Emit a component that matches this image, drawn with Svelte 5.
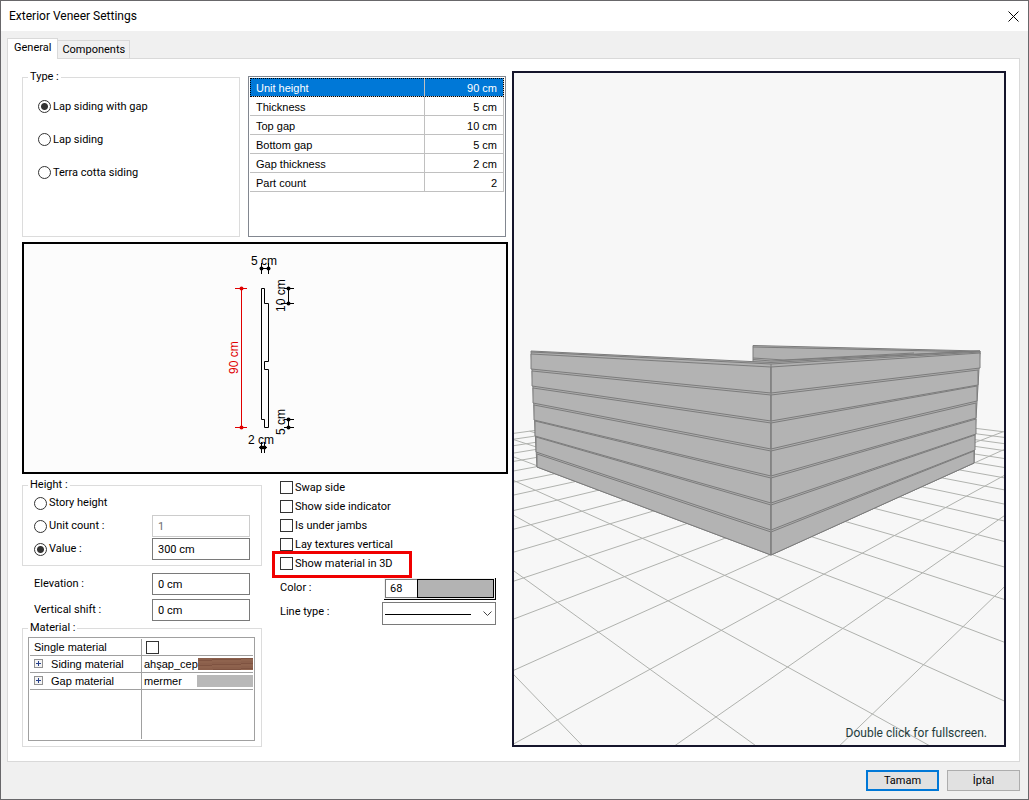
<script lang="ts">
  type Param = { name: string; value: string }
  type Point = [number, number]

  const tabs = ['General', 'Components']
  const types = ['Lap siding with gap', 'Lap siding', 'Terra cotta siding']

  const params: Param[] = [
    { name: 'Unit height', value: '90 cm' },
    { name: 'Thickness', value: '5 cm' },
    { name: 'Top gap', value: '10 cm' },
    { name: 'Bottom gap', value: '5 cm' },
    { name: 'Gap thickness', value: '2 cm' },
    { name: 'Part count', value: '2' }
  ]

  let options = $state([
    { label: 'Swap side', on: false },
    { label: 'Show side indicator', on: false },
    { label: 'Is under jambs', on: false },
    { label: 'Lay textures vertical', on: false },
    { label: 'Show material in 3D', on: false, marked: true }
  ])

  let tab = $state('General')
  let type = $state('Lap siding with gap')
  let selected = $state('Unit height')
  let heightMode = $state('value')
  let unitCount = $state('1')
  let height = $state('300 cm')
  let elevation = $state('0 cm')
  let shift = $state('0 cm')
  let color = $state('68')
  let single = $state(false)

  // Floor plane -> view
  function project(u: number, v: number): Point {
    const w = 1 - 0.1238 * u + 0.1295 * v
    return [(136 + 40.98 * u + 98.14 * v) / w, (596.3 - 32.06 * u + 33.15 * v) / w]
  }

  function line(a: Point, b: Point) {
    return `M${a[0].toFixed(1)} ${a[1].toFixed(1)}L${b[0].toFixed(1)} ${b[1].toFixed(1)}`
  }

  let floor = ''
  for (let u = -14; u <= 2; u++) floor += line(project(u, -3), project(u, 16))
  for (let v = -1; v <= 16; v++) floor += line(project(-14, v), project(4, v))

  // Each board: left x, top, bottom / corner top, bottom / right x, top, bottom
  const boards = [
    [17, 281, 296, 294, 320, 466, 280, 295],
    [18, 298, 313, 322, 348, 464, 297, 312],
    [19, 315, 330, 350, 376, 463, 313, 328],
    [20, 332, 347, 378, 403, 462, 330, 345],
    [21, 348, 363, 405, 430, 462, 346, 361],
    [22, 364, 379, 432, 457, 461, 362, 377],
    [23, 381, 394, 459, 482, 460, 378, 390]
  ]
</script>

<main class="dialog">
  <header class="title">
    <h1>Exterior Veneer Settings</h1>
    <button type="button" class="close" aria-label="Close">
      <svg width="11" height="11" viewBox="0 0 11 11"><path d="M.5 .5l10 10M10.5 .5l-10 10" /></svg>
    </button>
  </header>

  <div class="body">
    <div class="tabs" role="tablist">
      {#each tabs as t}
        <button type="button" role="tab" aria-selected={tab === t} class:active={tab === t} onclick={() => tab = t}>{t}</button>
      {/each}
    </div>

    <section class="panel">
      <div class="settings">
        <div class="top">
          <fieldset class="types">
            <legend>Type :</legend>
            {#each types as t}
              <label><input type="radio" name="type" value={t} bind:group={type} />{t}</label>
            {/each}
          </fieldset>

          <div class="list">
            <table>
              <tbody>
                {#each params as p (p.name)}
                  <tr class:selected={selected === p.name} onclick={() => selected = p.name}>
                    <th scope="row">{p.name}</th>
                    <td>{p.value}</td>
                  </tr>
                {/each}
              </tbody>
            </table>
          </div>
        </div>

        <div class="section-view">
          <svg width="482" height="228" viewBox="0 0 482 228">
            <path class="ink" d="M237.5 44.5H240.5V59.5H244.5V117.5H240.5V125.5H244.5V183.5H240.5V175.5H237.5Z" />
            <g class="dim red">
              <path d="M217.5 44.5V183.5M211 44.5H223M211 183.5H223" />
              <circle cx="217.5" cy="44.5" r="2" /><circle cx="217.5" cy="183.5" r="2" />
              <text transform="translate(214 130) rotate(-90)">90 cm</text>
            </g>
            <g class="dim">
              <path d="M237.5 19V30M244.5 19V30M237 24.5H245" />
              <circle cx="237.5" cy="24.5" r="2" /><circle cx="244.5" cy="24.5" r="2" />
              <text x="227" y="21">5 cm</text>
              <path d="M237.5 198V209M240.5 198V209M235 203.5H243" />
              <circle cx="237.5" cy="203.5" r="2" /><circle cx="240.5" cy="203.5" r="2" />
              <text x="224" y="200">2 cm</text>
              <path d="M264.5 44.5V59.5M260 44.5H270M257 59.5H270" />
              <circle cx="264.5" cy="44.5" r="2" /><circle cx="264.5" cy="59.5" r="2" />
              <text transform="translate(261 68) rotate(-90)">10 cm</text>
              <path d="M264.5 175.5V183.5M260 175.5H270M260 183.5H270" />
              <circle cx="264.5" cy="175.5" r="2" /><circle cx="264.5" cy="183.5" r="2" />
              <text transform="translate(261 191) rotate(-90)">5 cm</text>
            </g>
          </svg>
        </div>

        <div class="bottom">
          <div class="left">
            <fieldset class="height">
              <legend>Height :</legend>
              <div class="row">
                <label><input type="radio" name="height" value="story" bind:group={heightMode} />Story height</label>
              </div>
              <div class="row">
                <label><input type="radio" name="height" value="count" bind:group={heightMode} />Unit count :</label>
                <input type="text" aria-label="Unit count" bind:value={unitCount} disabled={heightMode !== 'count'} />
              </div>
              <div class="row">
                <label><input type="radio" name="height" value="value" bind:group={heightMode} />Value :</label>
                <input type="text" aria-label="Value" bind:value={height} disabled={heightMode !== 'value'} />
              </div>
            </fieldset>

            <div class="offsets">
              <div class="row">
                <label for="elevation">Elevation :</label>
                <input id="elevation" type="text" bind:value={elevation} />
              </div>
              <div class="row">
                <label for="shift">Vertical shift :</label>
                <input id="shift" type="text" bind:value={shift} />
              </div>
            </div>

            <fieldset class="material">
              <legend>Material :</legend>
              <div class="tree">
                <table>
                  <tbody>
                    <tr>
                      <th scope="row"><label for="single">Single material</label></th>
                      <td><input id="single" type="checkbox" bind:checked={single} /></td>
                    </tr>
                    <tr>
                      <th scope="row">
                        <button type="button" aria-label="Expand siding material"><svg width="9" height="9" viewBox="0 0 9 9"><path d="M2 4.5h5M4.5 2v5" /></svg></button>
                        Siding material
                      </th>
                      <td><div class="cell"><span>ahşap_cep</span><i class="wood"></i></div></td>
                    </tr>
                    <tr>
                      <th scope="row">
                        <button type="button" aria-label="Expand gap material"><svg width="9" height="9" viewBox="0 0 9 9"><path d="M2 4.5h5M4.5 2v5" /></svg></button>
                        Gap material
                      </th>
                      <td><div class="cell"><span>mermer</span><i></i></div></td>
                    </tr>
                    <tr class="rest"><td></td><td></td></tr>
                  </tbody>
                </table>
              </div>
            </fieldset>
          </div>

          <div class="right">
            {#each options as o}
              <label class="option" class:marked={o.marked}><input type="checkbox" bind:checked={o.on} />{o.label}</label>
            {/each}
            <div class="picks">
              <label for="color">Color :</label>
              <div class="color">
                <input id="color" type="text" bind:value={color} />
                <button type="button" aria-label="Choose color"></button>
              </div>
              <label for="linetype">Line type :</label>
              <div class="linetype">
                <select id="linetype"><option value="solid" aria-label="Solid"></option></select>
                <svg width="9" height="6" viewBox="0 0 9 6"><path d="M.5 .5l4 4 4-4" /></svg>
              </div>
            </div>
          </div>
        </div>
      </div>

      <div class="scene">
        <svg viewBox="0 0 490 672" preserveAspectRatio="xMidYMid slice">
          <path class="floor" d={floor} />
          <path class="wall" d="M239 272.5L466 278V281L257 291 239 289Z" />
          <path class="edge" d="M239 274L466 279" />
          <path class="wall" d="M17 278L257 289.5 466 278 465 296 464 313 463 329 462 345 461 361 460 390 257 482 23 394Z" />
          <path class="edge" d="M17 279L257 291 466 279M239 285L270 287 400 280M239 286.5L257 288 466 278" />
          {#each boards as [lx, lt, lb, ct, cb, rx, rt, rb]}
            <path class="board" d="M{lx} {lt}L257 {ct}V{cb}L{lx} {lb}Z" />
            <path class="board" d="M257 {ct}L{rx} {rt}V{rb}L257 {cb}Z" />
          {/each}
          <path class="edge" d="M257 291V482" />
        </svg>
        <p>Double click for fullscreen.</p>
      </div>
    </section>

    <footer>
      <button type="button" class="default">Tamam</button>
      <button type="button">İptal</button>
    </footer>
  </div>
</main>

<style>
  :global(body) { margin: 0; background: #f0f0f0; }

  .dialog {
    box-sizing: border-box;
    min-height: 100vh;
    min-width: 860px;
    border: 1px solid #68676a;
    background: #f0f0f0;
    color: #000;
    font: 11px/14px Roboto, "Noto Sans", sans-serif;
  }
  .dialog :is(input, select, button) { font: inherit; color: inherit; box-sizing: border-box; margin: 0; }

  .title { display: flex; align-items: center; justify-content: space-between; height: 30px; padding: 0 9px 0 8px; background: #fff; }
  h1 { margin: 0; font-size: 12px; font-weight: 400; line-height: 16px; }
  .close { display: flex; padding: 0; border: 0; background: none; }
  .close path { fill: none; stroke: #000; }

  .body { padding: 7px 8px 8px 6px; }
  .tabs { display: flex; align-items: flex-end; height: 20px; }
  .tabs button { height: 18px; padding: 0 4px; border: 1px solid #d9d9d9; border-width: 1px 1px 0 0; background: #f0f0f0; }
  .tabs button.active { position: relative; height: 21px; padding: 0 6px 2px; border-left-width: 1px; background: #fff; margin-bottom: -1px; }

  .panel {
    display: grid;
    grid-template-columns: 486px 1fr;
    gap: 4px;
    padding: 11px 13px 14px 14px;
    border: 1px solid #d9d9d9;
    background: #fff;
  }

  fieldset { box-sizing: border-box; min-width: 0; margin: 0; padding: 0; border: 1px solid #dcdcdc; }
  legend { margin-left: 5px; padding: 0 2px; line-height: 14px; }

  input[type="radio"], input[type="checkbox"] {
    appearance: none;
    flex: none;
    width: 13px;
    height: 13px;
    border: 1px solid #333;
    background: #fff;
  }
  input[type="radio"] { border-radius: 50%; }
  input[type="radio"]:checked { background: radial-gradient(circle, #333 3px, #fff 4px); }
  input[type="checkbox"]:checked { background: linear-gradient(#333, #333) center / 7px 7px no-repeat; }
  input[type="text"] { height: 22px; width: 98px; padding: 0 5px; border: 1px solid #7a7a7a; background: #fff; }
  input[type="text"]:disabled { border-color: #ccc; color: #6d6d6d; }

  .top { display: grid; grid-template-columns: 218px 258px; gap: 8px; height: 167px; }
  .types { padding-top: 6px; }
  .types label { display: flex; align-items: center; gap: 2px; height: 33px; padding-left: 15px; }

  .list { box-sizing: border-box; margin-top: 6px; padding: 1px; border: 1px solid #828790; font-family: "Liberation Sans", sans-serif; }
  .list table { width: 100%; border-collapse: separate; border-spacing: 0; }
  .list th, .list td { box-sizing: border-box; height: 19px; padding: 2px 6px 0; border: 1px solid #c0c0c0; border-width: 0 1px 1px 0; font-weight: 400; text-align: left; }
  .list td { width: 79px; text-align: right; }
  .list .selected { background: #0078d7; color: #fff; outline: 1px dotted #000; outline-offset: -1px; }

  .section-view { display: flex; justify-content: center; margin-top: 5px; border: 2px solid #000; background: #fcfcfc; }
  .ink { fill: #fcfcfc; stroke: #000; }
  .dim path { fill: none; stroke: #000; }
  .dim text { font: 12px "Liberation Sans", sans-serif; }
  .dim.red path { stroke: #e00000; }
  .red circle, .red text { fill: #e00000; }

  .bottom { display: grid; grid-template-columns: 240px 216px; gap: 18px; margin-top: 4px; }
  .row { display: flex; align-items: center; justify-content: space-between; height: 22px; padding: 0 11px; }
  .row label { display: flex; align-items: center; gap: 2px; }
  .height { height: 88px; }
  .height .row { margin-bottom: 1px; }
  .offsets { display: grid; gap: 4px; padding: 7px 1px 0; }

  .material { height: 126px; }
  .tree { margin: 2px 6px 0 5px; }
  .tree table { width: 100%; height: 104px; table-layout: fixed; border: 1px solid #a0a0a0; padding: 1px; border-collapse: separate; border-spacing: 0; font-family: "Liberation Sans", sans-serif; }
  .tree th, .tree td { box-sizing: border-box; height: 17px; padding: 0 0 0 2px; border-bottom: 1px solid #a0a0a0; font-weight: 400; line-height: 16px; text-align: left; white-space: nowrap; }
  .tree tr > :first-child { width: 112px; padding-left: 4px; border-right: 1px solid #a0a0a0; }
  .tree .rest td { height: auto; border-bottom: 0; }
  .tree td > input { display: block; margin-left: 2px; }
  .tree button { width: 9px; height: 9px; margin-right: 5px; padding: 0; border: 0; outline: 1px solid #919191; outline-offset: -1px; background: #f4f4f4; }
  .tree button svg { display: block; }
  .tree button path { stroke: #26408b; }
  .cell { display: flex; align-items: center; justify-content: space-between; }
  .cell i { width: 56px; height: 12px; background: #b8b8b8; }
  .cell .wood { background: repeating-linear-gradient(178deg, #8b5f4b 0 2px, #7f5341 2px 3px, #8f634e 3px 5px); }

  .option { position: relative; display: flex; align-items: center; gap: 2px; width: 140px; height: 19px; }
  .marked::after { content: ""; position: absolute; box-sizing: border-box; left: -8px; top: -3px; width: 140px; height: 27px; border: 3px solid #f00000; pointer-events: none; }
  .picks { display: grid; grid-template-columns: 1fr 114px; row-gap: 2px; justify-items: end; margin-top: 5px; }
  .picks > label { justify-self: start; padding-top: 3px; }
  .color { box-sizing: border-box; display: flex; width: 112px; height: 22px; border: 1px solid #000; border-width: 0 1px 1px 0; padding: 1px; background: #f0f0f0; }
  .color input[type="text"] { width: 32px; height: 19px; padding: 0 4px; border-width: 1px 0 1px 1px; }
  .color button { flex: 1; border: 1px solid #000; background: #b3b3b3; }
  .linetype { position: relative; width: 100%; }
  select { display: block; appearance: none; width: 100%; height: 23px; border: 1px solid #7a7a7a; border-radius: 0; background: linear-gradient(#000, #000) 2px 11px / 86px 1px no-repeat #fff; }
  .linetype svg { position: absolute; right: 4px; top: 9px; pointer-events: none; }
  .linetype path { fill: none; stroke: #444; }

  .scene { position: relative; overflow: hidden; margin-top: 1px; border: 2px solid #15152b; background: #f7f7f7; }
  .scene svg { position: absolute; inset: 0; width: 100%; height: 100%; }
  .scene p { position: absolute; right: 17px; bottom: 4px; margin: 0; color: #243c3c; font-size: 12px; line-height: 16px; }
  .floor { fill: none; stroke: #b0b2ae; }
  .wall { fill: #b0b0b0; stroke: #7c7c7c; }
  .board { fill: #b3b3b3; stroke: #7c7c7c; }
  .edge { fill: none; stroke: #7c7c7c; }

  footer { display: flex; justify-content: flex-end; gap: 8px; margin-top: 8px; }
  footer button { width: 73px; height: 21px; padding: 0; border: 1px solid #adadad; background: #e1e1e1; }
  footer .default { border: 2px solid #0078d7; }
</style>
